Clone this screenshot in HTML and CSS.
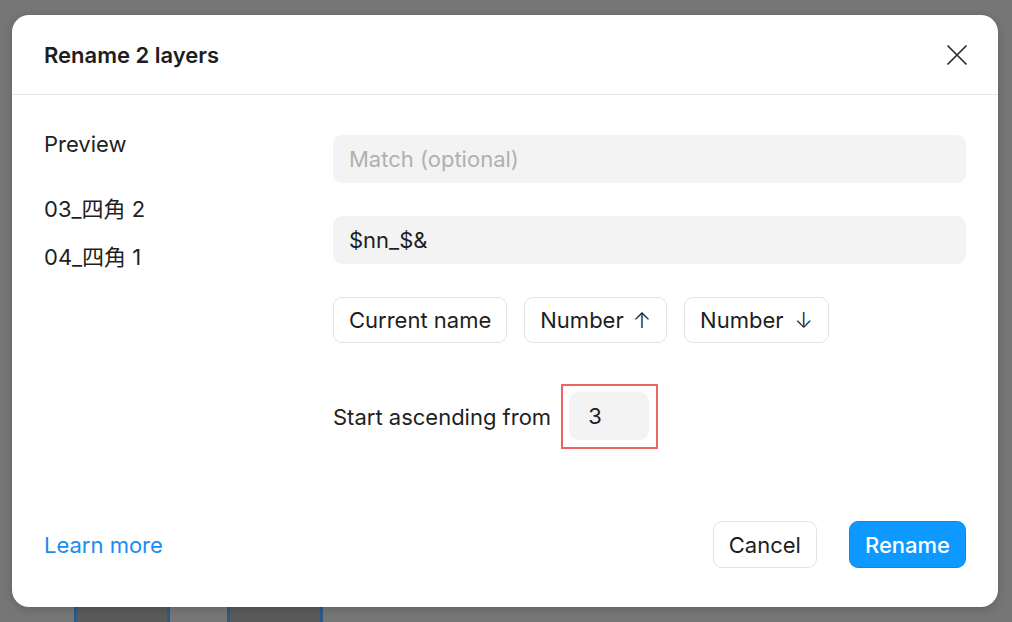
FILE: index.html
```html
<!DOCTYPE html>
<html lang="en">
<head>
<meta charset="utf-8">
<title>Rename 2 layers</title>
<link rel="stylesheet" href="styles.css">
</head>
<body>
<div class="canvas">
  <div class="frame frame-a"></div>
  <div class="frame frame-b"></div>
</div>
<div class="dialog">
  <header class="dialog-header">
    <h1 class="dialog-title">Rename 2 layers</h1>
    <button class="close" aria-label="Close">
      <svg width="22" height="22" viewBox="0 0 22 22"><path d="M1.5 1.5L20.5 20.5M20.5 1.5L1.5 20.5" stroke="#2b2b2b" stroke-width="1.7" fill="none"/></svg>
    </button>
  </header>
  <div class="dialog-body">
    <div class="preview">
      <div class="preview-label">Preview</div>
      <ul class="preview-list">
        <li>03_四角 2</li>
        <li>04_四角 1</li>
      </ul>
    </div>
    <div class="form">
      <div class="field placeholder">Match (optional)</div>
      <div class="field">$nn_$&amp;</div>
      <div class="chips">
        <button class="chip">Current name</button>
        <button class="chip">Number<span class="arrow">↑</span></button>
        <button class="chip">Number<span class="arrow arrow-down">↓</span></button>
      </div>
      <div class="start-row">
        <span>Start ascending from</span>
        <div class="num-wrap"><div class="num-field">3</div></div>
      </div>
    </div>
  </div>
  <footer class="dialog-footer">
    <a class="learn" href="#">Learn more</a>
    <div class="actions">
      <button class="btn btn-cancel">Cancel</button>
      <button class="btn btn-primary">Rename</button>
    </div>
  </footer>
</div>
</body>
</html>
```
FILE: styles.css
```css
* { box-sizing: border-box; }
html, body { margin: 0; height: 100%; }
body {
  background: #767676;
  font-family: Inter, "Noto Sans CJK JP", sans-serif;
  color: #1f1f1f;
  padding: 15px 14px 0 12px;
  position: relative;
  overflow: hidden;
}
.canvas { position: absolute; inset: 0; }
.frame {
  position: absolute;
  top: 560px;
  height: 80px;
  width: 96px;
  background: #5a5a5a;
  border-left: 3px solid #2b5a85;
  border-right: 3px solid #2b5a85;
}
.frame-a { left: 74px; }
.frame-b { left: 227px; }

.dialog {
  position: relative;
  background: #fff;
  border-radius: 17px;
  height: 592px;
  display: flex;
  flex-direction: column;
  box-shadow: 0 2px 10px rgba(0,0,0,0.18);
}
.dialog-header {
  height: 80px;
  padding: 0 30px 0 32px;
  display: flex;
  align-items: center;
  justify-content: space-between;
  border-bottom: 1px solid #e6e6e6;
}
.dialog-title {
  margin: 0;
  font-size: 22px;
  font-weight: 600;
  color: #1e1e1e;
}
.close {
  border: 0;
  background: none;
  padding: 0;
  width: 22px;
  height: 22px;
  display: flex;
}
.dialog-body {
  display: flex;
  padding: 40px 32px 0 32px;
}
.preview { width: 289px; font-size: 22px; }
.preview-label { line-height: 18px; }
.preview-list { list-style: none; margin: 32px 0 0; padding: 0; }
.preview-list li { line-height: 48px; height: 48px; }

.form { flex: 1; display: flex; flex-direction: column; }
.field {
  height: 48px;
  background: #f3f3f3;
  border-radius: 9px;
  padding: 0 16px;
  display: flex;
  align-items: center;
  font-size: 22px;
  color: #1e1e1e;
}
.field + .field { margin-top: 33px; }
.placeholder { color: #b0b0b0; }
.chips { display: flex; gap: 17px; margin-top: 33px; }
.chip {
  font: inherit;
  font-size: 22px;
  color: #1e1e1e;
  height: 46px;
  padding: 0 15px;
  background: #fff;
  border: 1.5px solid #e3e3e3;
  border-radius: 9px;
}
.arrow { margin-left: 9px; font-weight: 300; }
.arrow-down { margin-left: 11px; }
.start-row {
  display: flex;
  align-items: center;
  gap: 10px;
  margin-top: 41px;
  font-size: 22px;
}
.num-wrap {
  border: 2px solid #ec6464;
  padding: 6px 7px 7px 6px;
}
.num-field {
  width: 80px;
  height: 48px;
  background: #f3f3f3;
  border-radius: 9px;
  padding-left: 19px;
  display: flex;
  align-items: center;
}

.dialog-footer {
  margin-top: auto;
  padding: 0 32px 39px;
  display: flex;
  align-items: center;
  justify-content: space-between;
}
.learn {
  color: #1a8cec;
  text-decoration: none;
  font-size: 22px;
}
.actions { display: flex; gap: 32px; }
.btn {
  font: inherit;
  font-size: 22px;
  height: 47px;
  padding: 0 15px;
  border-radius: 9px;
}
.btn-cancel { background: #fff; border: 1.5px solid #e3e3e3; color: #1e1e1e; }
.btn-primary { background: #0d99ff; border: 1px solid #0a8ae6; color: #fff; font-weight: 500; }
```
